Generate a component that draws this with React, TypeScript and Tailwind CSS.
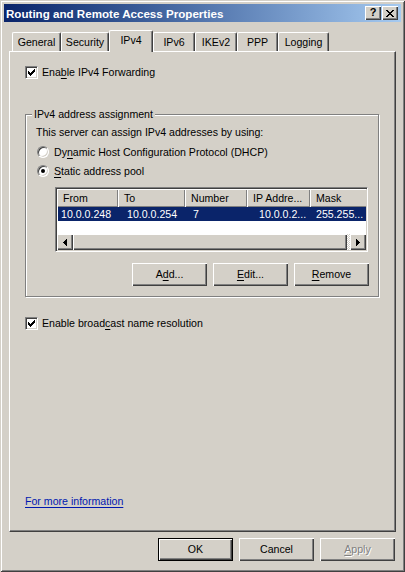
import React from "react";

const raised = "shadow-[inset_1px_1px_#ffffff,inset_-1px_-1px_#404040,inset_-2px_-2px_#808080]";

function CheckBox() {
  return (
    <span className="w-[13px] h-[13px] shrink-0 bg-white border border-t-[#808080] border-l-[#808080] border-r-white border-b-white shadow-[inset_1px_1px_#404040,inset_-1px_-1px_#d4d0c8] flex items-center justify-center">
      <svg width="7" height="7" viewBox="0 0 7 7" shapeRendering="crispEdges">
        <rect x="6" y="0" width="1" height="1" fill="#000" />
        <rect x="5" y="1" width="2" height="1" fill="#000" />
        <rect x="0" y="2" width="1" height="1" fill="#000" />
        <rect x="4" y="2" width="3" height="1" fill="#000" />
        <rect x="0" y="3" width="2" height="1" fill="#000" />
        <rect x="3" y="3" width="3" height="1" fill="#000" />
        <rect x="0" y="4" width="5" height="1" fill="#000" />
        <rect x="1" y="5" width="3" height="1" fill="#000" />
        <rect x="2" y="6" width="1" height="1" fill="#000" />
      </svg>
    </span>
  );
}

function Radio({ checked }: { checked?: boolean }) {
  return (
    <span className="w-[12px] h-[12px] shrink-0 rounded-full bg-white border border-t-[#808080] border-l-[#808080] border-r-white border-b-white shadow-[inset_1px_1px_#404040,inset_-1px_-1px_#d4d0c8] flex items-center justify-center">
      {checked && <span className="w-[4px] h-[4px] rounded-full bg-black" />}
    </span>
  );
}

function Btn({ children, isDefault, disabled }: { children: React.ReactNode; isDefault?: boolean; disabled?: boolean }) {
  return (
    <div
      className={
        isDefault
          ? "w-[75px] h-[23px] flex items-center justify-center border border-black bg-[#d4d0c8] shadow-[inset_1px_1px_#ffffff,inset_-1px_-1px_#404040,inset_-2px_-2px_#808080]"
          : `w-[75px] h-[23px] flex items-center justify-center bg-[#d4d0c8] ${raised}`
      }
    >
      <span className={disabled ? "text-[#808080] [text-shadow:1px_1px_0_#ffffff]" : "text-black"}>{children}</span>
    </div>
  );
}

function U({ children }: { children: React.ReactNode }) {
  return <span className="underline underline-offset-[2px] decoration-1">{children}</span>;
}

function ArrowLeft() {
  return (
    <svg width="4" height="7" viewBox="0 0 4 7" shapeRendering="crispEdges">
      <polygon points="4,0 0,3.5 4,7" fill="#000" />
    </svg>
  );
}

function ArrowRight() {
  return (
    <svg width="4" height="7" viewBox="0 0 4 7" shapeRendering="crispEdges">
      <polygon points="0,0 4,3.5 0,7" fill="#000" />
    </svg>
  );
}

const tabs = [
  { label: "General", w: "w-[49px]" },
  { label: "Security", w: "w-[48px]" },
  { label: "IPv4", w: "w-[44px]", active: true },
  { label: "IPv6", w: "w-[42px]" },
  { label: "IKEv2", w: "w-[42px]" },
  { label: "PPP", w: "w-[41px]" },
  { label: "Logging", w: "w-[51px]" },
];

const columns = [
  { label: "From", w: "w-[61px]" },
  { label: "To", w: "w-[67px]" },
  { label: "Number", w: "w-[62px]" },
  { label: "IP Addre...", w: "w-[63px]" },
  { label: "Mask", w: "w-[70px]" },
];

export default function App() {
  return (
    <div className="w-[405px] h-[572px] bg-[#d4d0c8] p-[4px] flex flex-col font-['Liberation_Sans',Arial,sans-serif] text-[10.6px] leading-[13px] text-black shadow-[inset_1px_1px_#d4d0c8,inset_-1px_-1px_#404040,inset_2px_2px_#ffffff,inset_-2px_-2px_#808080] overflow-hidden">
      {/* title bar */}
      <div className="h-[18px] shrink-0 flex items-center justify-between pl-[2px] pr-[3px] bg-linear-to-r from-[#0a246a] to-[#a6caf0]">
        <span className="text-white font-bold text-[11.6px]">Routing and Remote Access Properties</span>
        <div className="flex gap-[1px]">
          <div className={`w-[16px] h-[14px] bg-[#d4d0c8] flex items-center justify-center ${raised}`}>
            <span className="font-bold text-[11px] leading-none -mt-px">?</span>
          </div>
          <div className={`w-[16px] h-[14px] bg-[#d4d0c8] flex items-center justify-center ${raised}`}>
            <svg width="8" height="7" viewBox="0 0 8 7" shapeRendering="crispEdges">
              <path d="M0 0h2v1h-2zM6 0h2v1h-2zM1 1h2v1h-2zM5 1h2v1h-2zM2 2h4v1h-4zM3 3h2v1h-2zM2 4h4v1h-4zM1 5h2v1h-2zM5 5h2v1h-2zM0 6h2v1h-2zM6 6h2v1h-2z" fill="#000" />
            </svg>
          </div>
        </div>
      </div>

      <div className="flex flex-col px-[5px] pt-[8px] flex-1">
        {/* tabs */}
        <div className="flex items-end h-[21px] pl-[3px]">
          {tabs.map((t) =>
            t.active ? (
              <div
                key={t.label}
                className={`${t.w} h-[22px] -mb-px relative z-10 bg-[#d4d0c8] border-l border-t border-white border-r border-r-[#404040] rounded-t-[2px] shadow-[inset_-1px_0_#808080] flex items-center justify-center pb-[2px]`}
              >
                {t.label}
              </div>
            ) : (
              <div
                key={t.label}
                className={`${t.w} h-[19px] bg-[#d4d0c8] border-l border-t border-white border-r border-r-[#404040] rounded-t-[2px] shadow-[inset_-1px_0_#808080] flex items-center justify-center`}
              >
                {t.label}
              </div>
            )
          )}
        </div>

        {/* tab panel */}
        <div className="h-[481px] flex flex-col border-l border-t border-white border-r border-b border-r-[#404040] border-b-[#404040] shadow-[inset_-1px_-1px_#808080] pl-[15px]">
          <div className="mt-[14px] h-[13px] flex items-center gap-[4px]">
            <CheckBox />
            <span>
              Ena<U>b</U>le IPv4 Forwarding
            </span>
          </div>

          {/* group box */}
          <div className="mt-[35px] w-[354px] relative border border-[#808080] shadow-[inset_1px_1px_#ffffff,1px_1px_#ffffff] flex flex-col pb-[10px]">
            <span className="absolute -top-[7px] left-[6px] px-[2px] bg-[#d4d0c8]">IPv4 address assignment</span>
            <div className="mt-[10px] ml-[10px] h-[14px] flex items-center">
              This server can assign IPv4 addresses by using:
            </div>
            <div className="mt-[6px] ml-[11px] h-[14px] flex items-center gap-[5px]">
              <Radio />
              <span>
                Dy<U>n</U>amic Host Configuration Protocol (DHCP)
              </span>
            </div>
            <div className="mt-[5px] ml-[11px] h-[14px] flex items-center gap-[5px]">
              <Radio checked />
              <span>
                <U>S</U>tatic address pool
              </span>
            </div>

            {/* list view */}
            <div className="mt-[9px] ml-[29px] w-[313px] h-[65px] border border-t-[#808080] border-l-[#808080] border-r-white border-b-white shadow-[inset_1px_1px_#404040,inset_-1px_-1px_#d4d0c8] p-px">
              <div className="w-full h-full bg-white flex flex-col overflow-hidden">
                <div className="flex h-[18px] shrink-0">
                  {columns.map((c) => (
                    <div
                      key={c.label}
                      className={`${c.w} shrink-0 h-full bg-[#d4d0c8] flex items-center pl-[6px] shadow-[inset_1px_1px_#ffffff,inset_-1px_-1px_#808080] whitespace-nowrap`}
                    >
                      {c.label}
                    </div>
                  ))}
                </div>
                <div className="flex h-[14px] shrink-0 bg-[#0a246a] text-white items-center ml-px">
                  <span className="w-[61px] shrink-0 pl-[3px]">10.0.0.248</span>
                  <span className="w-[67px] shrink-0 pl-[8px]">10.0.0.254</span>
                  <span className="w-[62px] shrink-0 pl-[7px]">7</span>
                  <span className="w-[63px] shrink-0 pl-[11px]">10.0.0.2...</span>
                  <span className="w-[56px] shrink-0 pl-[5px]">255.255...</span>
                </div>
                <div className="flex-1" />
                <div className="flex h-[16px] shrink-0">
                  <div className={`w-[16px] bg-[#d4d0c8] flex items-center justify-center ${raised}`}>
                    <ArrowLeft />
                  </div>
                  <div className={`w-[274px] bg-[#d4d0c8] ${raised}`} />
                  <div className="flex-1 bg-[repeating-conic-gradient(#ffffff_0_25%,#d4d0c8_0_50%)] bg-size-[2px_2px]" />
                  <div className={`w-[16px] bg-[#d4d0c8] flex items-center justify-center ${raised}`}>
                    <ArrowRight />
                  </div>
                </div>
              </div>
            </div>

            {/* Add / Edit / Remove */}
            <div className="mt-[11px] flex justify-end gap-[6px] pr-[9px]">
              <Btn>
                A<U>d</U>d...
              </Btn>
              <Btn>
                <U>E</U>dit...
              </Btn>
              <Btn>
                <U>R</U>emove
              </Btn>
            </div>
          </div>

          <div className="mt-[20px] h-[13px] flex items-center gap-[4px]">
            <CheckBox />
            <span>
              Enable broad<U>c</U>ast name resolution
            </span>
          </div>

          <div className="mt-auto mb-[23px] h-[14px] flex items-center">
            <span className="text-[#0018b0] underline underline-offset-[2px] decoration-1">For more information</span>
          </div>
        </div>

        {/* dialog buttons */}
        <div className="mt-[6px] flex justify-end gap-[6px] pr-[1px]">
          <Btn isDefault>OK</Btn>
          <Btn>Cancel</Btn>
          <Btn disabled>
            <U>A</U>pply
          </Btn>
        </div>
      </div>
    </div>
  );
}
